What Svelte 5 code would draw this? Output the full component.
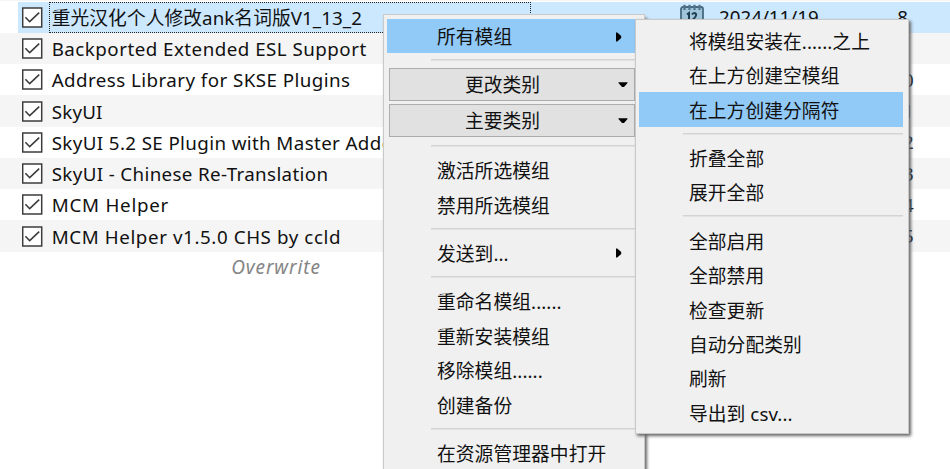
<script>
  const mods = [
    { name: '重光汉化个人修改ank名词版V1_13_2', spacing: 0.05, priority: 8, date: '2024/11/19', selected: true },
    { name: 'Backported Extended ESL Support', spacing: 0.48, priority: 9 },
    { name: 'Address Library for SKSE Plugins', spacing: 0.44, priority: 10 },
    { name: 'SkyUI', spacing: 0.2, priority: 11 },
    { name: 'SkyUI 5.2 SE Plugin with Master Added', spacing: 0.38, priority: 12 },
    { name: 'SkyUI - Chinese Re-Translation', spacing: 0.36, priority: 13 },
    { name: 'MCM Helper', spacing: 0.75, priority: 14 },
    { name: 'MCM Helper v1.5.0 CHS by ccld', spacing: 0.59, priority: 15 }
  ];
  const mainMenu = [
    { label: '所有模组', active: true, arrow: true },
    { sep: true },
    { combo: '更改类别' },
    { combo: '主要类别' },
    { sep: true },
    { label: '激活所选模组' },
    { label: '禁用所选模组' },
    { sep: true },
    { label: '发送到...', arrow: true },
    { sep: true },
    { label: '重命名模组......' },
    { label: '重新安装模组' },
    { label: '移除模组......' },
    { label: '创建备份' },
    { sep: true },
    { label: '在资源管理器中打开' }
  ];
  const subMenu = [
    { label: '将模组安装在......之上' },
    { label: '在上方创建空模组' },
    { label: '在上方创建分隔符', active: true },
    { sep: true },
    { label: '折叠全部' },
    { label: '展开全部' },
    { sep: true },
    { label: '全部启用' },
    { label: '全部禁用' },
    { label: '检查更新' },
    { label: '自动分配类别' },
    { label: '刷新' },
    { label: '导出到 csv...' }
  ];
</script>

{#snippet entries(list)}
  {#each list as entry}
    {#if entry.sep}
      <div class="sep"></div>
    {:else if entry.combo}
      <div class="combo">
        <span>{entry.combo}</span>
        <svg class="down" viewBox="0 0 10 6"><path d="M0.5 0.3H9.5V1L6 5H4L0.5 1Z" /></svg>
      </div>
    {:else}
      <div class="item" class:active={entry.active}>
        <span>{entry.label}</span>
        {#if entry.arrow}
          <svg class="right" viewBox="0 0 6 10"><path d="M0 0.5H1.2L5.2 4V6L1.2 9.5H0Z" /></svg>
        {/if}
      </div>
    {/if}
  {/each}
{/snippet}

<main>
  <div class="list">
    {#each mods as mod}
      <div class="row" class:selected={mod.selected}>
        <svg class="check" viewBox="0 0 21 21">
          <rect x="0.7" y="1" width="19" height="19" fill="#fff" stroke="#3c3c3c" stroke-width="1.5" />
          <path d="M3.4 10.2L7.7 14.7L17.2 5.7" fill="none" stroke="#3c3c3c" stroke-width="1.6" />
        </svg>
        <div class="name"><span style="letter-spacing: {mod.spacing}px">{mod.name}</span></div>
        <div class="icon">
          {#if mod.date}
            <svg viewBox="0 0 24 26" width="24" height="26">
              <rect x="1" y="3" width="22" height="22" rx="2" fill="#a0c4da" stroke="#456a80" stroke-width="1.8" />
              <path d="M4.5 0.8V6M9.5 0.8V6M14.5 0.8V6M19.5 0.8V6" stroke="#4f748b" stroke-width="2.2" />
              <path d="M7 10.5L9 9V17M12 10.5Q14 8 16 10Q17 12 12 16.5H17.5" fill="none" stroke="#1d3c50" stroke-width="2" />
            </svg>
          {/if}
        </div>
        <div class="date">{mod.date ?? ''}</div>
        <div class="priority">{mod.priority}</div>
      </div>
    {/each}
    <div class="overwrite">Overwrite</div>
  </div>

  <div class="menu primary">{@render entries(mainMenu)}</div>
  <div class="menu secondary">{@render entries(subMenu)}</div>
</main>

<style>
  main {
    position: relative;
    width: 950px;
    height: 469px;
    overflow: hidden;
    background: #fff;
    color: #111;
    font: 18.75px/1 'Noto Sans', 'Noto Sans CJK SC', sans-serif;
    white-space: nowrap;
  }
  .list {
    padding-top: 1.7px;
    background: linear-gradient(#f5f5f5 0 1px, #fff 1px);
  }
  .row {
    display: grid;
    grid-template-columns: 27px 482px 175px 175px 69px;
    align-items: center;
    height: 31.25px;
    padding-left: 22px;
  }
  .row:nth-child(even) {
    background: #f5f5f5;
  }
  .selected {
    background: linear-gradient(90deg, #fff 17.5px, #cce8ff 17.5px);
  }
  .check {
    width: 21px;
    height: 21px;
  }
  .name {
    display: flex;
    align-items: center;
    box-sizing: border-box;
    height: 30.5px;
    padding: 2px 0 0 1.7px;
    border: 1px solid transparent;
  }
  .selected .name {
    border: 1px dotted #222;
  }
  .icon {
    display: flex;
    box-sizing: border-box;
    justify-content: flex-end;
    padding: 0 2px 0 0;
  }
  .date {
    padding: 1px 0 0 13px;
  }
  .priority {
    width: 44px;
    padding-top: 1px;
    text-align: center;
    letter-spacing: 1px;
  }
  .overwrite {
    width: 552px;
    height: 31px;
    line-height: 31px;
    text-align: center;
    font-style: italic;
    font-size: 19px;
    letter-spacing: 0.9px;
    color: #858585;
  }
  .menu {
    position: absolute;
    box-sizing: border-box;
    border: 1.5px solid #c9c9c9;
    background: #f0f0f0;
  }
  .primary {
    left: 383px;
    top: 14px;
    width: 262px;
    height: 470px;
    padding: 4px 9px 0 3px;
    box-shadow: 2px 4px 3px #666;
  }
  .secondary {
    left: 635px;
    top: 19px;
    width: 274px;
    height: 415px;
    padding: 3.5px 5px 0 3px;
    box-shadow: 2px 2px 3px #666;
  }
  .item {
    display: flex;
    align-items: center;
    justify-content: space-between;
    height: 34.45px;
    padding: 0 13px 0 50px;
  }
  .item span {
    padding-top: 3px;
    letter-spacing: 0.06px;
  }
  .item svg {
    margin-top: 1px;
  }
  .active {
    background: #91c9f7;
  }
  .sep {
    height: 13.8px;
    margin-left: 44px;
    background: linear-gradient(#d4d4d4, #d4d4d4) 0 6px / 100% 1.5px no-repeat;
  }
  .combo {
    display: flex;
    align-items: center;
    justify-content: space-between;
    box-sizing: border-box;
    height: 33px;
    margin: 0 0 3px 2px;
    padding: 0 6px 0 75px;
    border: 1.5px solid #adadad;
    background: #e1e1e1;
  }
  .sep + .combo {
    margin-top: 1px;
  }
  .combo + .sep {
    margin-top: -1px;
  }
  .combo span {
    padding-top: 2px;
  }
  .right {
    width: 6px;
    height: 10px;
  }
  .down {
    width: 10px;
    height: 6px;
  }
</style>
